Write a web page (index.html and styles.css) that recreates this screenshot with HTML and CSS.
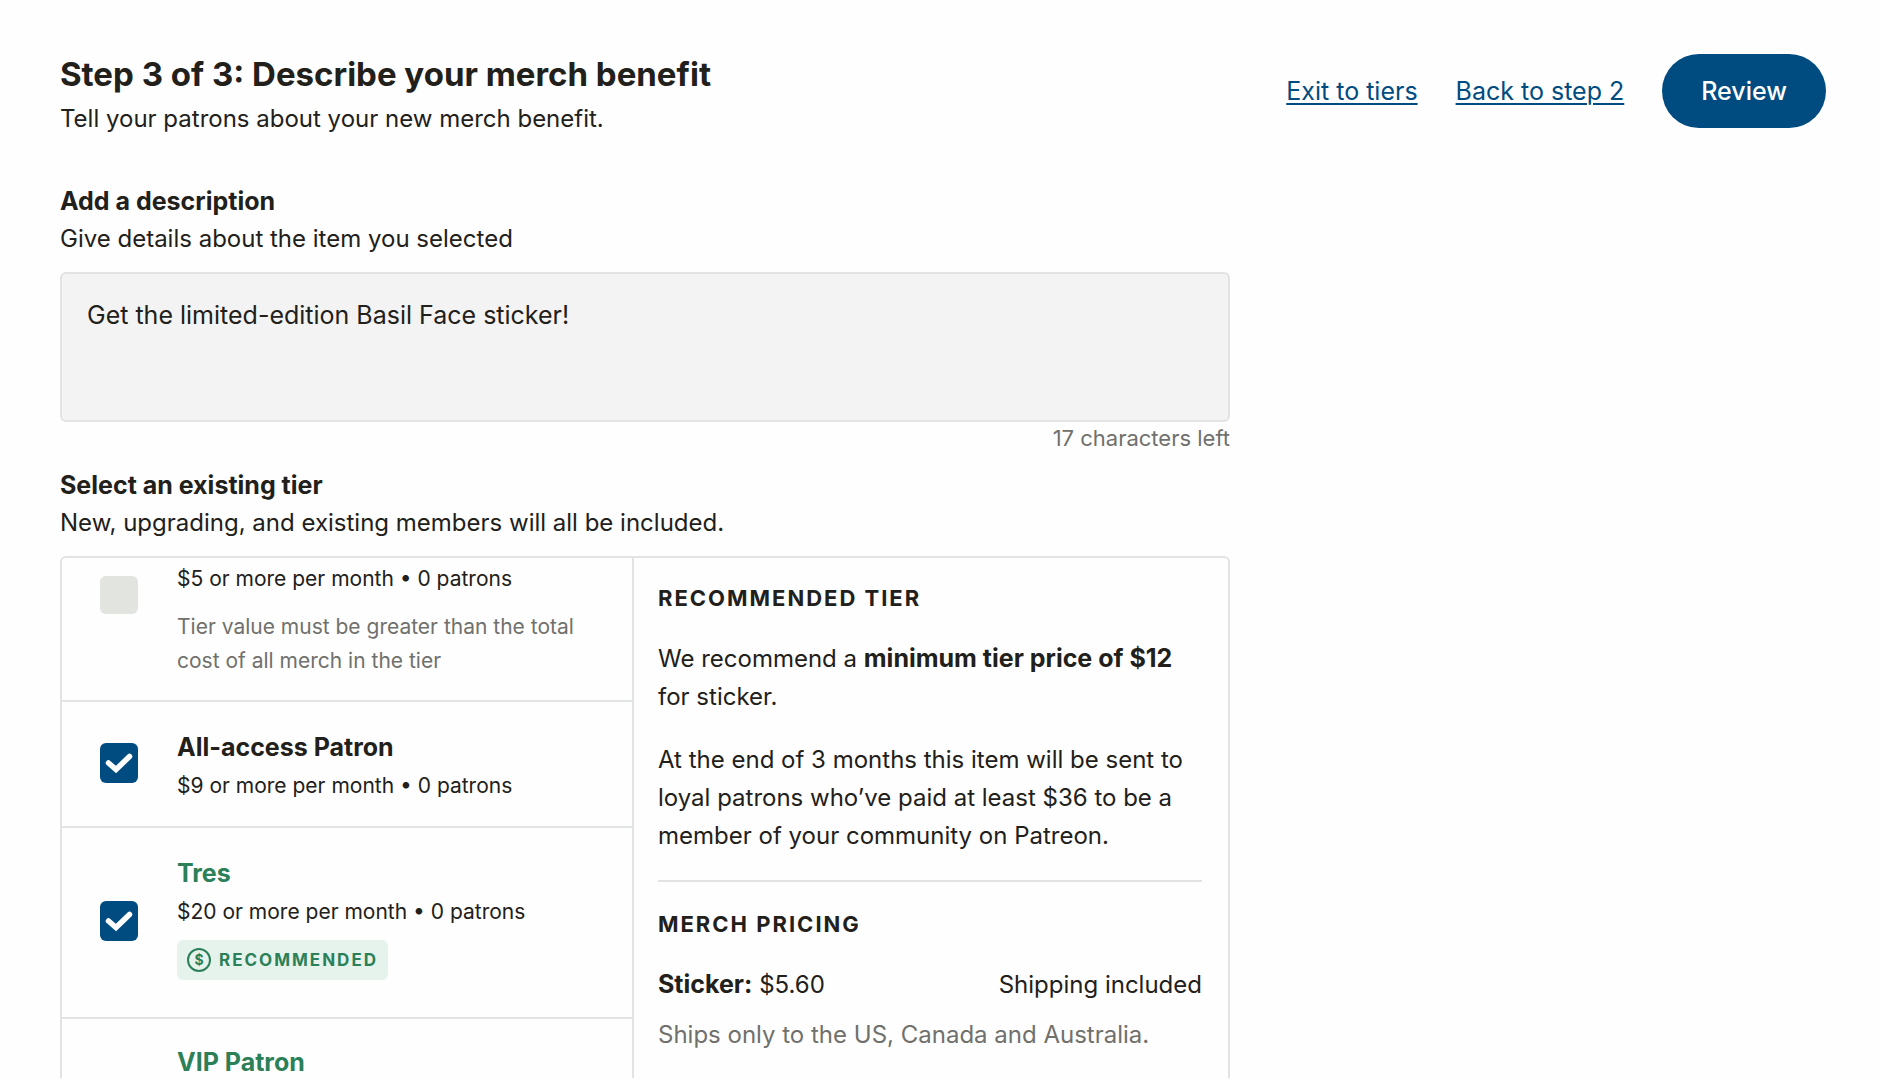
FILE: index.html
```html
<!DOCTYPE html>
<html lang="en">
<head>
<meta charset="utf-8">
<meta name="viewport" content="width=device-width, initial-scale=1">
<title>Describe your merch benefit</title>
<link rel="stylesheet" href="styles.css">
</head>
<body>
<div class="page">
  <header class="header">
    <div>
      <h1 class="title">Step 3 of 3: Describe your merch benefit</h1>
      <p>Tell your patrons about your new merch benefit.</p>
    </div>
    <nav class="actions">
      <a class="link" href="#tiers">Exit to tiers</a>
      <a class="link" href="#step-2">Back to step 2</a>
      <button class="button" type="button">Review</button>
    </nav>
  </header>

  <div class="columns">
    <main>
      <section class="field">
        <label class="label" for="description">Add a description</label>
        <p id="description-hint">Give details about the item you selected</p>
        <textarea class="textarea" id="description" aria-describedby="description-hint">Get the limited-edition Basil Face sticker!</textarea>
        <p class="counter">17 characters left</p>
      </section>

      <section class="field">
        <h2 class="label">Select an existing tier</h2>
        <p>New, upgrading, and existing members will all be included.</p>
        <div class="panel">
          <div class="tiers">
            <div class="tier tier-first">
              <input class="checkbox" type="checkbox" id="tier-5" disabled>
              <label class="tier-text" for="tier-5">
                <span class="tier-price">$5 or more per month • 0 patrons</span>
                <span class="tier-note">Tier value must be greater than the total cost of all merch in the tier</span>
              </label>
            </div>
            <div class="tier">
              <input class="checkbox" type="checkbox" id="tier-9" checked>
              <label class="tier-text" for="tier-9">
                <span class="tier-name">All-access Patron</span>
                <span class="tier-price">$9 or more per month • 0 patrons</span>
              </label>
            </div>
            <div class="tier">
              <input class="checkbox" type="checkbox" id="tier-20" checked>
              <label class="tier-text" for="tier-20">
                <span class="tier-name green">Tres</span>
                <span class="tier-price">$20 or more per month • 0 patrons</span>
                <span class="badge"><span class="coin">$</span>RECOMMENDED</span>
              </label>
            </div>
            <div class="tier tier-last">
              <input class="checkbox" type="checkbox" id="tier-vip">
              <label class="tier-text" for="tier-vip">
                <span class="tier-name green">VIP Patron</span>
              </label>
            </div>
          </div>
          <aside class="info">
            <h3 class="caps">RECOMMENDED TIER</h3>
            <p>We recommend a <strong>minimum tier price of $12</strong> for sticker.</p>
            <p>At the end of 3 months this item will be sent to loyal patrons who’ve paid at least $36 to be a member of your community on Patreon.</p>
            <hr class="rule">
            <h3 class="caps">MERCH PRICING</h3>
            <div>
              <p class="price"><span><strong>Sticker:</strong> $5.60</span><span>Shipping included</span></p>
              <p class="muted">Ships only to the US, Canada and Australia.</p>
            </div>
          </aside>
        </div>
      </section>
    </main>
  </div>
</div>
</body>
</html>
```
FILE: styles.css
```css
:root {
  --ink: #22201a;
  --muted: #70706c;
  --blue: #004c81;
  --green: #2b8058;
  --line: #e1e4e2;
}

* {
  box-sizing: border-box;
}

body {
  margin: 0;
  background: #fefefe;
  color: var(--ink);
  font: 24px/38px Inter, "Liberation Sans", sans-serif;
}

h1, h2, h3, p {
  margin: 0;
}

strong {
  font-size: 25px;
  line-height: 34px;
  font-weight: 700;
}

.page {
  height: 100vh;
  overflow: hidden;
  padding: 54px 53px 0 60px;
}

.header {
  display: flex;
  justify-content: space-between;
  align-items: flex-start;
}

.title {
  margin-bottom: 6px;
  font-size: 33px;
  line-height: 40px;
  font-weight: 700;
}

.actions {
  display: flex;
  align-items: center;
  gap: 38px;
  font-size: 25px;
}

.link {
  color: var(--blue);
  text-decoration-thickness: 2px;
  text-underline-offset: 3px;
}

.button {
  height: 74px;
  padding: 0 39px;
  border: 0;
  border-radius: 37px;
  background: var(--blue);
  color: #fff;
  font: inherit;
  font-weight: 500;
}

.columns {
  display: grid;
  grid-template-columns: 2fr 1fr;
  gap: 11px;
  margin-top: 44px;
}

.field {
  margin-bottom: 12px;
}

.label {
  display: block;
  font-size: 25px;
  font-weight: 700;
}

.textarea {
  display: block;
  width: 100%;
  height: 150px;
  margin-top: 14px;
  padding: 22px 25px;
  border: 2px solid var(--line);
  border-radius: 6px;
  background: #f3f3f3;
  color: inherit;
  font: inherit;
  font-size: 25px;
  resize: none;
}

.counter {
  color: var(--muted);
  font-size: 22px;
  line-height: 32px;
  text-align: right;
}

.panel {
  display: grid;
  grid-template-columns: 26fr 27fr;
  margin-top: 14px;
  border: 2px solid var(--line);
  border-radius: 6px;
}

.tiers {
  border-right: 2px solid var(--line);
}

.tier {
  display: flex;
  align-items: center;
  gap: 39px;
  padding: 18px 38px 21px;
}

.tier + .tier {
  border-top: 2px solid var(--line);
}

.tier-text {
  display: flex;
  flex-direction: column;
  align-items: flex-start;
  padding-top: 12px;
}

.tier-name {
  margin-bottom: 5px;
  font-size: 25px;
  line-height: 30px;
  font-weight: 700;
}

.tier-price {
  font-size: 21px;
}

.tier-note {
  margin-top: 12px;
  color: var(--muted);
  font-size: 21px;
  line-height: 34px;
}

.tier-first {
  align-items: flex-start;
  padding-top: 0;
  padding-bottom: 22px;
}

.tier-first .tier-text {
  padding-top: 2px;
}

.tier-first .checkbox {
  margin-top: 18px;
}

.tier-last {
  align-items: flex-start;
}

.tier-last .tier-text {
  padding-top: 10px;
}

.tier-last .checkbox {
  margin-top: 52px;
}

.green {
  color: var(--green);
}

.checkbox {
  flex: none;
  width: 38px;
  height: 40px;
  margin: 0;
  appearance: none;
  border-radius: 6px;
  background: #e2e4df;
}

.checkbox:disabled {
  height: 38px;
}

.checkbox:checked {
  background: var(--blue) url("data:image/svg+xml,%3Csvg xmlns='http://www.w3.org/2000/svg' viewBox='0 0 38 40'%3E%3Cpath d='M8.500 20L16 26.500L29.500 13.500' fill='none' stroke='white' stroke-width='5.500' stroke-linecap='round'/%3E%3C/svg%3E") center / 100% 100%;
}

.badge {
  display: flex;
  align-items: center;
  gap: 8px;
  height: 40px;
  margin: 9px 0 16px;
  padding: 0 10px;
  border-radius: 6px;
  background: #e6f3ed;
  color: var(--green);
  font-size: 17px;
  font-weight: 700;
  letter-spacing: 2px;
}

.coin {
  width: 24px;
  height: 24px;
  border: 2px solid;
  border-radius: 50%;
  font-size: 14px;
  line-height: 20px;
  letter-spacing: 0;
  text-align: center;
}

.info {
  display: flex;
  flex-direction: column;
  gap: 25px;
  padding: 23px 26px 40px 24px;
}

.caps {
  font-size: 22px;
  line-height: 34px;
  font-weight: 700;
  letter-spacing: 2px;
}

.rule {
  width: 100%;
  height: 2px;
  margin: 0;
  border: 0;
  background: var(--line);
}

.price {
  display: flex;
  justify-content: space-between;
  margin-bottom: 12px;
}

.muted {
  color: var(--muted);
}
```
